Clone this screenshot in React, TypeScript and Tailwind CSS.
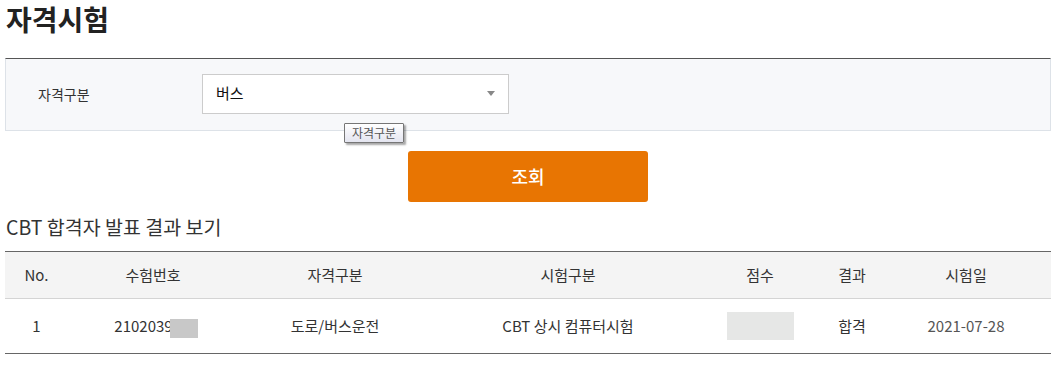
const font = "font-['Noto_Sans_CJK_KR','Noto_Sans',sans-serif]";

const cols = [
  { label: "No.", w: "w-[63px]" },
  { label: "수험번호", w: "w-[170px]" },
  { label: "자격구분", w: "w-[194px]" },
  { label: "시험구분", w: "w-[272px]" },
  { label: "점수", w: "w-[112px]" },
  { label: "결과", w: "w-[72px]" },
  { label: "시험일", w: "w-[156px]" },
];

export default function App() {
  return (
    <div className={`w-[1059px] h-[365px] bg-white text-[#333] ${font}`}>
      <h2 className="pl-[6px] pt-0 h-[58px] text-[28px] leading-[38px] font-bold text-[#222]">자격시험</h2>

      <div className="relative ml-[5px] w-[1046px] h-[73px] border-t border-t-[#555] border-x border-b border-x-[#dde2e8] border-b-[#dde2e8] bg-[#f7f8fa] flex items-center">
        <span className="w-[196px] pl-[32px] text-[14px] text-[#333]">자격구분</span>
        <div className="w-[307px] h-[40px] -mt-[2px] bg-white border border-[#ccc] flex items-center justify-between pl-[13px] pr-[13px]">
          <span className="text-[15px] text-[#111]">버스</span>
          <svg width="8" height="5" viewBox="0 0 8 5">
            <path d="M0 0h8L4 5z" fill="#888" />
          </svg>
        </div>
        <div className="absolute left-[338px] top-[64px] w-[60px] h-[20px] border border-[#767676] bg-gradient-to-b from-white to-[#e4e5f0] shadow-[2px_2px_2px_rgba(0,0,0,0.35)] text-[12px] leading-[18px] text-center text-[#555] rounded-[1px]">
          자격구분
        </div>
      </div>

      <div className="flex justify-center ml-[5px] w-[1046px] pt-[20px]">
        <button className="w-[240px] h-[51px] rounded-[3px] bg-[#e87502] text-white text-[18px] font-medium">조회</button>
      </div>

      <h3 className="pl-[6px] mt-[11px] text-[19.5px] leading-[28px] text-[#333]">CBT 합격자 발표 결과 보기</h3>

      <div className="ml-[5px] w-[1046px] mt-[10px] border-t border-[#666] border-b text-[15px]">
        <div className="flex h-[47px] items-center bg-[#f4f4f4] border-b border-[#d4d4d4] text-[#333]">
          {cols.map((c) => (
            <div key={c.label} className={`${c.w} text-center`}>{c.label}</div>
          ))}
        </div>
        <div className="flex h-[54px] items-center text-[#333]">
          <div className="w-[63px] text-center">1</div>
          <div className="w-[170px] flex justify-center pl-[6px]">
            <span>2102039</span>
            <span className="w-[28px] h-[19px] bg-[#c8c8c8] ml-[-3px] mt-[4px]" />
          </div>
          <div className="w-[194px] text-center">도로/버스운전</div>
          <div className="w-[272px] text-center">CBT 상시 컴퓨터시험</div>
          <div className="w-[112px] flex justify-center">
            <span className="w-[67px] h-[28px] bg-[#e6e7e6]" />
          </div>
          <div className="w-[72px] text-center">합격</div>
          <div className="w-[156px] text-center text-[#555]">2021-07-28</div>
        </div>
      </div>
    </div>
  );
}
